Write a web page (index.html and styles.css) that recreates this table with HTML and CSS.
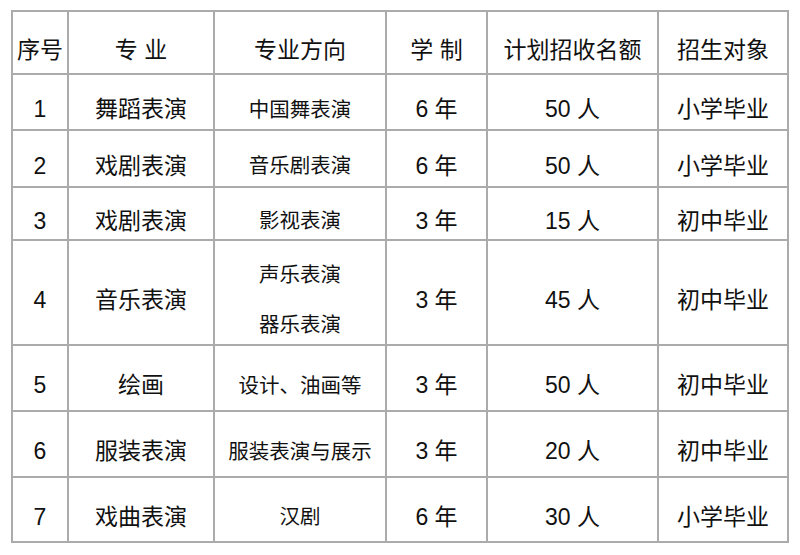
FILE: index.html
```html
<!DOCTYPE html>
<html lang="zh-CN">
<head>
<meta charset="utf-8">
<title>招生专业</title>
<link rel="stylesheet" href="styles.css">
</head>
<body>
<table class="plan">
  <colgroup>
    <col class="c-no">
    <col class="c-major">
    <col class="c-dir">
    <col class="c-years">
    <col class="c-quota">
    <col class="c-target">
  </colgroup>
  <thead>
    <tr class="r-head">
      <th>序号</th>
      <th>专 业</th>
      <th>专业方向</th>
      <th>学 制</th>
      <th>计划招收名额</th>
      <th>招生对象</th>
    </tr>
  </thead>
  <tbody>
    <tr class="r1">
      <td>1</td><td>舞蹈表演</td><td class="dir">中国舞表演</td><td>6 年</td><td>50 人</td><td>小学毕业</td>
    </tr>
    <tr class="r2">
      <td>2</td><td>戏剧表演</td><td class="dir">音乐剧表演</td><td>6 年</td><td>50 人</td><td>小学毕业</td>
    </tr>
    <tr class="r3">
      <td>3</td><td>戏剧表演</td><td class="dir">影视表演</td><td>3 年</td><td>15 人</td><td>初中毕业</td>
    </tr>
    <tr class="r4">
      <td>4</td><td>音乐表演</td>
      <td class="dir"><div class="lines"><span>声乐表演</span><span>器乐表演</span></div></td>
      <td>3 年</td><td>45 人</td><td>初中毕业</td>
    </tr>
    <tr class="r5">
      <td>5</td><td>绘画</td><td class="dir">设计、油画等</td><td>3 年</td><td>50 人</td><td>初中毕业</td>
    </tr>
    <tr class="r6">
      <td>6</td><td>服装表演</td><td class="dir">服装表演与展示</td><td>3 年</td><td>20 人</td><td>初中毕业</td>
    </tr>
    <tr class="r7">
      <td>7</td><td>戏曲表演</td><td class="dir">汉剧</td><td>6 年</td><td>30 人</td><td>小学毕业</td>
    </tr>
  </tbody>
</table>
</body>
</html>
```
FILE: styles.css
```css
html, body {
  margin: 0;
  padding: 0;
  background: #ffffff;
}

body {
  padding: 10px 0 0 11px;
  font-family: "Liberation Sans", "Noto Sans CJK SC", sans-serif;
  color: #111111;
}

.plan {
  border-collapse: collapse;
  table-layout: fixed;
  width: 778px;
}

.c-no { width: 56px; }
.c-major { width: 146px; }
.c-dir { width: 172px; }
.c-years { width: 101px; }
.c-quota { width: 171px; }
.c-target { width: 130px; }

.plan th,
.plan td {
  border: 2px solid #ababab;
  padding: 16px 0 0 0;
  text-align: center;
  vertical-align: middle;
  font-size: 23px;
  font-weight: normal;
  line-height: 1.2;
  white-space: nowrap;
}

.plan td.dir {
  font-size: 20.5px;
}

.r-head { height: 63px; }
.r1 { height: 56px; }
.r2 { height: 57px; }
.r3 { height: 53px; }
.r4 { height: 105px; }
.r5 { height: 66px; }
.r6 { height: 66px; }
.r7 { height: 65px; }

.lines {
  display: flex;
  flex-direction: column;
  align-items: center;
  gap: 25px;
}
```
